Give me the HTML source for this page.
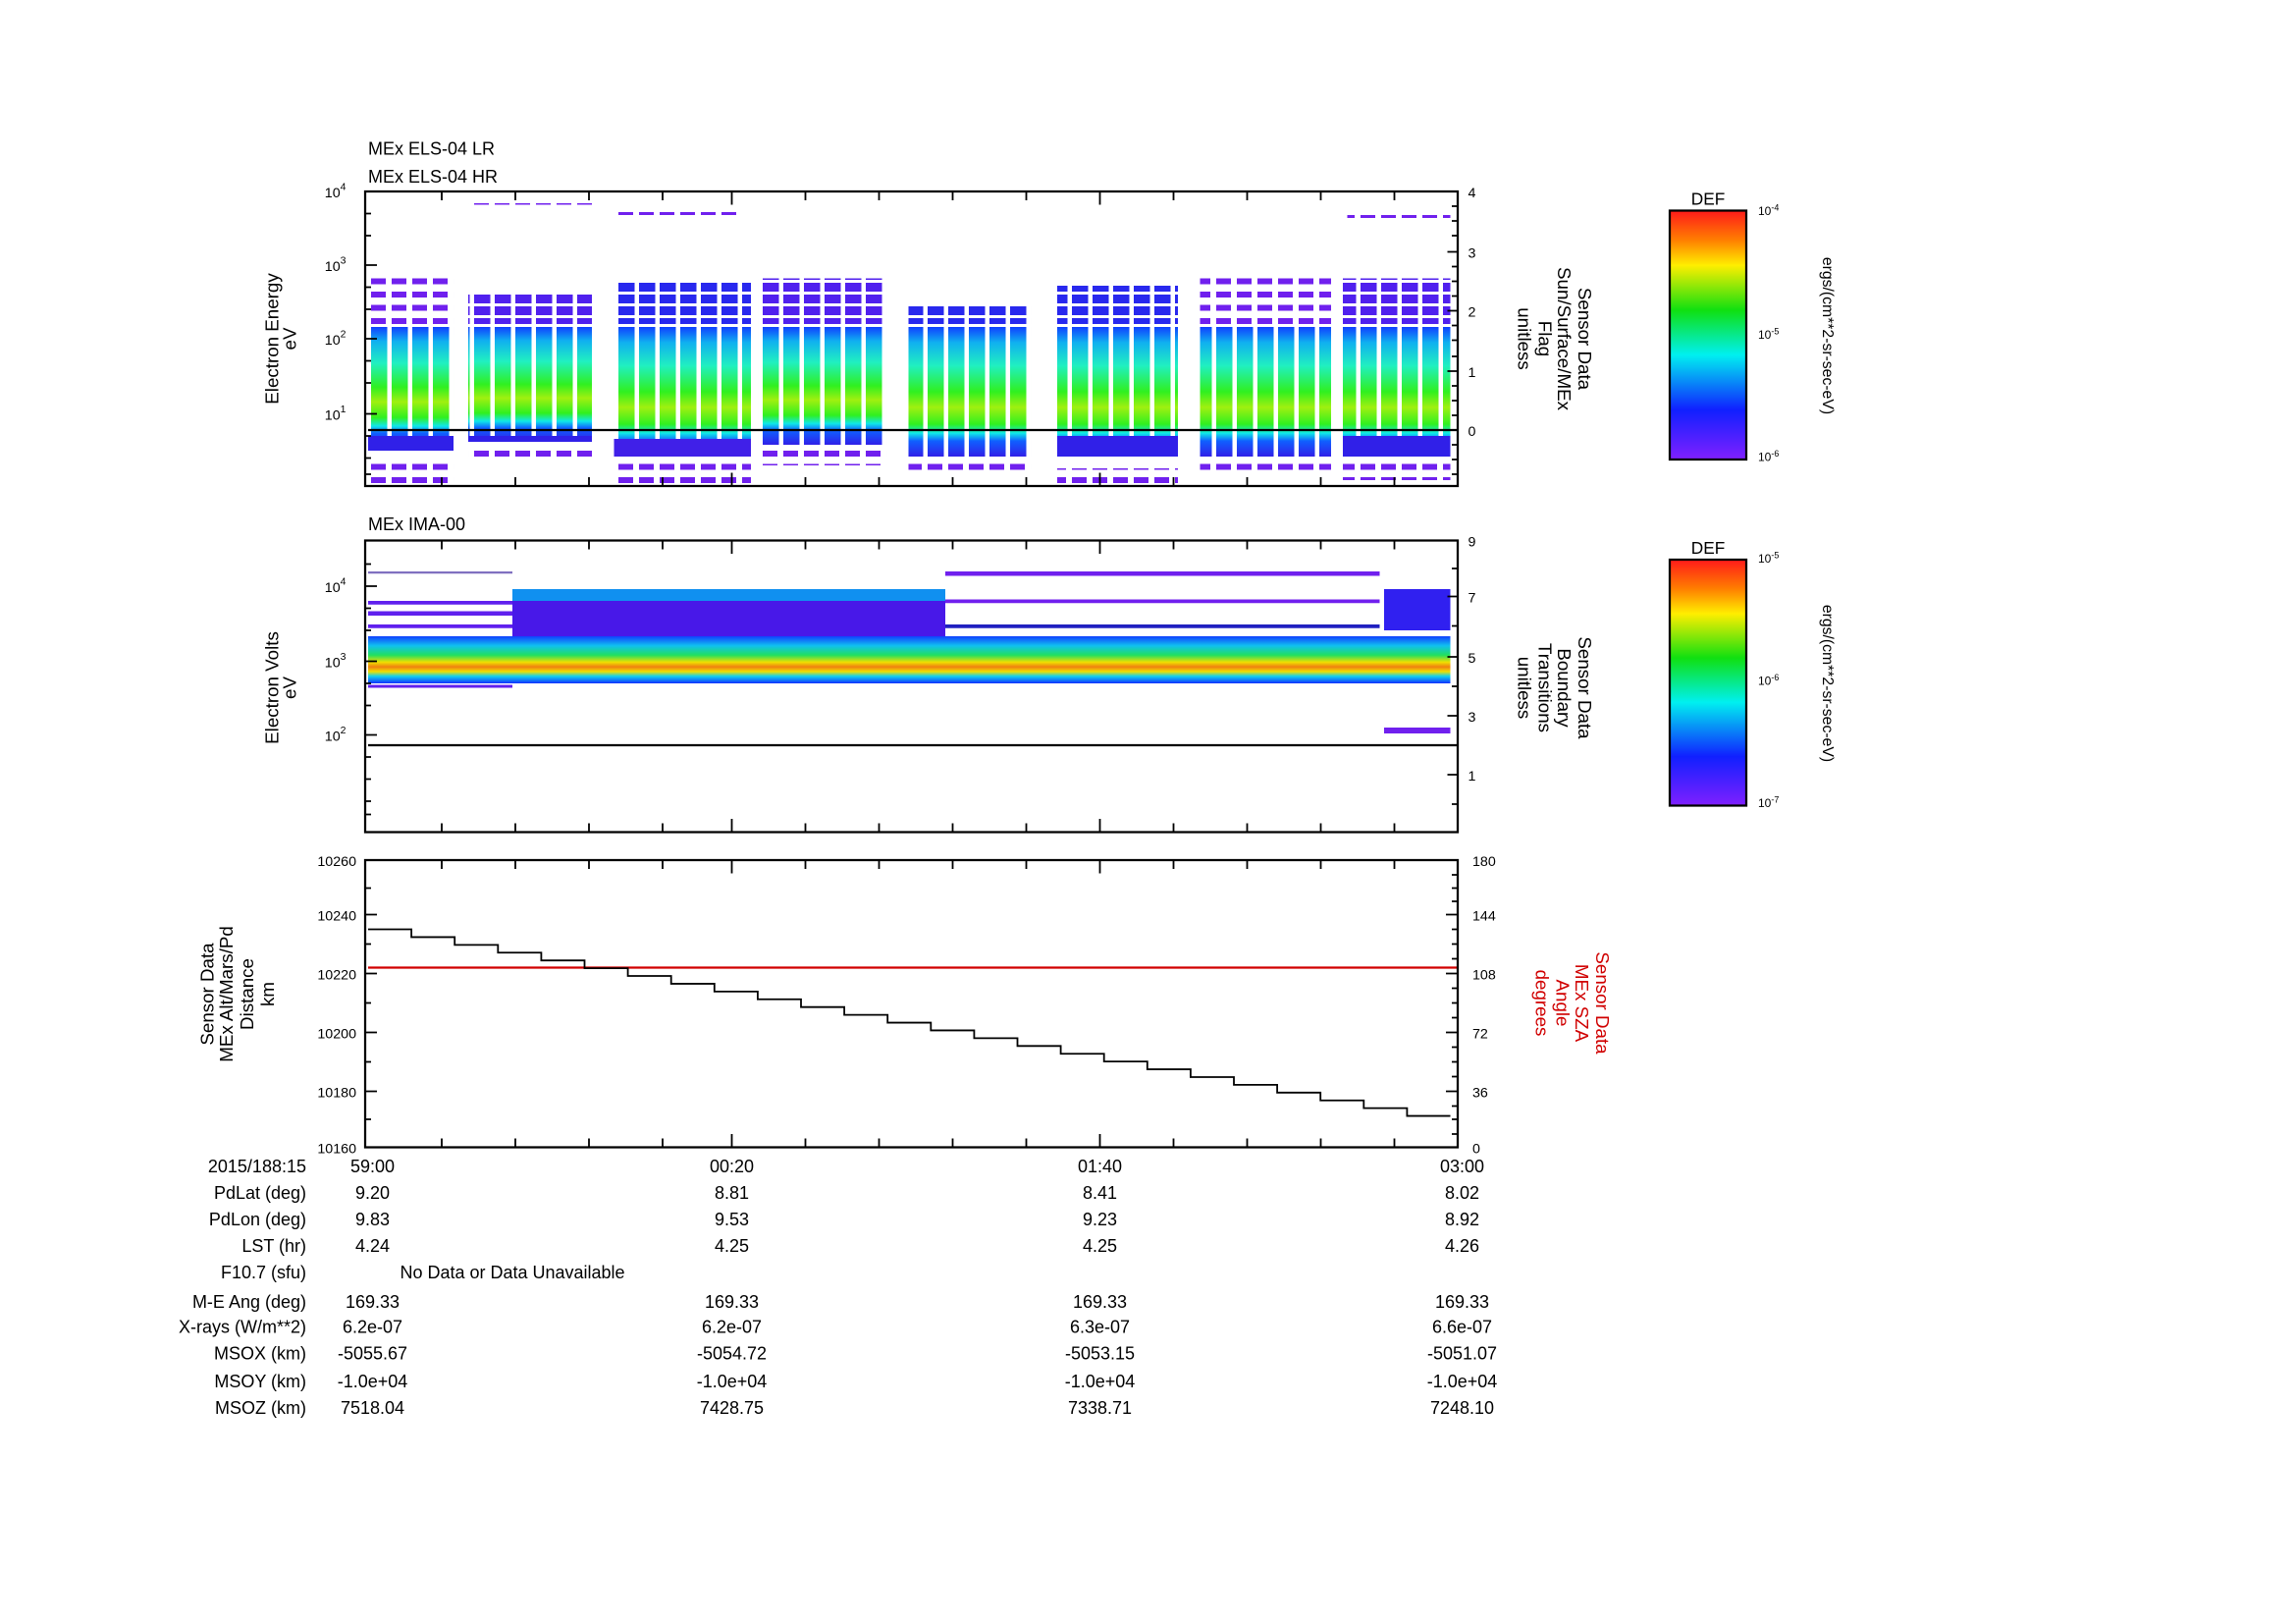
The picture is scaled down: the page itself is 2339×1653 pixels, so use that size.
<!DOCTYPE html>
<html><head><meta charset="utf-8"><style>
html,body{margin:0;padding:0;background:#fff}
svg{display:block}
text{font-family:"Liberation Sans",sans-serif;fill:#000}
</style></head><body>
<svg width="2339" height="1653" viewBox="0 0 1559.33 1102" xmlns="http://www.w3.org/2000/svg">
<defs>
<linearGradient id="cb" x1="0" y1="0" x2="0" y2="1">
<stop offset="0" stop-color="#ff1a1a"/><stop offset="0.12" stop-color="#ff8000"/><stop offset="0.22" stop-color="#ffee00"/><stop offset="0.4" stop-color="#10e010"/><stop offset="0.58" stop-color="#00f0f0"/><stop offset="0.8" stop-color="#1020ff"/><stop offset="1" stop-color="#8020ff"/>
</linearGradient>
<linearGradient id="p1" x1="0" y1="0" x2="0" y2="1">
<stop offset="0" stop-color="#1040ff"/><stop offset="0.12" stop-color="#10b0f0"/><stop offset="0.3" stop-color="#20f0c0"/><stop offset="0.5" stop-color="#30f020"/><stop offset="0.62" stop-color="#a0f010"/><stop offset="0.75" stop-color="#30f020"/><stop offset="0.82" stop-color="#10e8e8"/><stop offset="0.88" stop-color="#1060ff"/><stop offset="1" stop-color="#3020e8"/>
</linearGradient>
<linearGradient id="p2" x1="0" y1="0" x2="0" y2="1">
<stop offset="0" stop-color="#1040ff"/><stop offset="0.2" stop-color="#10c0f0"/><stop offset="0.4" stop-color="#20e060"/><stop offset="0.55" stop-color="#f0e000"/><stop offset="0.65" stop-color="#f08010"/><stop offset="0.75" stop-color="#f0e000"/><stop offset="0.85" stop-color="#10d0f0"/><stop offset="1" stop-color="#1030ff"/>
</linearGradient>
<pattern id="gap" width="14" height="10" patternUnits="userSpaceOnUse"><rect x="11" width="3" height="10" fill="#fff"/></pattern>
<pattern id="dash" width="14" height="9" patternUnits="userSpaceOnUse"><rect width="10" height="4" fill="#7020ee"/></pattern>
<pattern id="dashb" width="14" height="8" patternUnits="userSpaceOnUse"><rect width="11" height="6" fill="#2828ee"/></pattern>
<pattern id="dashp" width="14" height="8" patternUnits="userSpaceOnUse"><rect width="11" height="6" fill="#5020ee"/></pattern>
</defs>

<text x="250" y="105" font-size="12">MEx ELS-04 LR</text>
<text x="250" y="124" font-size="12">MEx ELS-04 HR</text>

<g>
<rect x="250" y="222" width="58" height="82" fill="url(#p1)"/>
<rect x="318" y="222" width="84" height="78" fill="url(#p1)"/>
<rect x="417" y="222" width="93" height="88" fill="url(#p1)"/>
<rect x="515" y="222" width="87" height="80" fill="url(#p1)"/>
<rect x="617" y="222" width="83" height="88" fill="url(#p1)"/>
<rect x="718" y="222" width="82" height="88" fill="url(#p1)"/>
<rect x="815" y="222" width="89" height="88" fill="url(#p1)"/>
<rect x="912" y="222" width="73" height="88" fill="url(#p1)"/>
<rect x="250" y="222" width="735" height="88" fill="url(#gap)"/>
<rect x="250" y="185" width="58" height="35" fill="url(#dash)"/>
<rect x="318" y="200" width="84" height="20" fill="url(#dashp)"/>
<rect x="417" y="192" width="93" height="28" fill="url(#dashb)"/>
<rect x="515" y="189" width="87" height="31" fill="url(#dashp)"/>
<rect x="617" y="206" width="83" height="14" fill="url(#dashb)"/>
<rect x="718" y="194" width="82" height="26" fill="url(#dashb)"/>
<rect x="815" y="185" width="89" height="35" fill="url(#dash)"/>
<rect x="912" y="189" width="73" height="31" fill="url(#dashp)"/>
<rect x="250" y="296" width="58" height="10" fill="#3020e8"/>
<rect x="318" y="296" width="84" height="4" fill="#3020e8"/>
<rect x="417" y="298" width="93" height="12" fill="#4020e8"/>
<rect x="718" y="296" width="82" height="14" fill="#3020e8"/>
<rect x="912" y="296" width="73" height="14" fill="#3020e8"/>
<rect x="250" y="314" width="58" height="16" fill="url(#dash)"/>
<rect x="318" y="306" width="84" height="6" fill="url(#dash)"/>
<rect x="417" y="314" width="93" height="14" fill="url(#dash)"/>
<rect x="515" y="306" width="87" height="10" fill="url(#dash)"/>
<rect x="617" y="312" width="83" height="8" fill="url(#dash)"/>
<rect x="718" y="318" width="82" height="10" fill="url(#dash)"/>
<rect x="815" y="310" width="89" height="12" fill="url(#dash)"/>
<rect x="912" y="312" width="73" height="14" fill="url(#dash)"/>
<rect x="318" y="138" width="84" height="4" fill="url(#dash)"/>
<rect x="417" y="142" width="83" height="4" fill="url(#dash)"/>
<rect x="718" y="130" width="78" height="2" fill="url(#dash)"/>
<rect x="915" y="146" width="70" height="4" fill="url(#dash)"/>
</g>
<line x1="250" y1="292" x2="990" y2="292" stroke="#000" stroke-width="1.5"/>
<rect x="248" y="130" width="742" height="200" fill="none" stroke="#000" stroke-width="1.5"/>

<g>
<rect x="250" y="432" width="735" height="32" fill="url(#p2)"/>
<rect x="348" y="400" width="294" height="8" fill="#1090f0"/>
<rect x="348" y="408" width="294" height="24" fill="#4818e8"/>
<rect x="940" y="400" width="45" height="28" fill="#3020f0"/>
<rect x="250" y="388" width="98" height="1.5" fill="#8070c0"/>
<rect x="250" y="408" width="98" height="2.5" fill="#6020ee"/>
<rect x="250" y="415" width="98" height="3" fill="#6020ee"/>
<rect x="250" y="424" width="98" height="2.5" fill="#6020ee"/>
<rect x="250" y="465" width="98" height="2" fill="#6020ee"/>
<rect x="642" y="388" width="295" height="3" fill="#7020ee"/>
<rect x="642" y="407" width="295" height="2.5" fill="#7020ee"/>
<rect x="642" y="424" width="295" height="2.5" fill="#2020c0"/>
<rect x="940" y="494" width="45" height="4" fill="#7020ee"/>
</g>
<line x1="250" y1="506" x2="990" y2="506" stroke="#000" stroke-width="1.5"/>
<text x="250" y="360" font-size="12">MEx IMA-00</text>
<rect x="248" y="367" width="742" height="198" fill="none" stroke="#000" stroke-width="1.5"/>

<line x1="250" y1="657" x2="990" y2="657" stroke="#d00000" stroke-width="1.5"/>
<path d="M250 631h29.4v5.28h29.4v5.28h29.4v5.28h29.4v5.28h29.4v5.28h29.4v5.28h29.4v5.28h29.4v5.28h29.4v5.28h29.4v5.28h29.4v5.28h29.4v5.28h29.4v5.28h29.4v5.28h29.4v5.28h29.4v5.28h29.4v5.28h29.4v5.28h29.4v5.28h29.4v5.28h29.4v5.28h29.4v5.28h29.4v5.28h29.4v5.28h29.4" fill="none" stroke="#000" stroke-width="1.2"/>
<rect x="248" y="584" width="742" height="195" fill="none" stroke="#000" stroke-width="1.5"/>

<g stroke="#000" stroke-width="1.2">
<path d="M300 130v6M350 130v6M400 130v6M450 130v6M497 130v9M547 130v6M597 130v6M647 130v6M697 130v6M747 130v9M797 130v6M847 130v6M897 130v6M947 130v6"/>
<path d="M300 330v-6M350 330v-6M400 330v-6M450 330v-6M497 330v-9M547 330v-6M597 330v-6M647 330v-6M697 330v-6M747 330v-9M797 330v-6M847 330v-6M897 330v-6M947 330v-6"/>
<path d="M300 367v6M350 367v6M400 367v6M450 367v6M497 367v9M547 367v6M597 367v6M647 367v6M697 367v6M747 367v9M797 367v6M847 367v6M897 367v6M947 367v6"/>
<path d="M300 565v-6M350 565v-6M400 565v-6M450 565v-6M497 565v-9M547 565v-6M597 565v-6M647 565v-6M697 565v-6M747 565v-9M797 565v-6M847 565v-6M897 565v-6M947 565v-6"/>
<path d="M300 584v6M350 584v6M400 584v6M450 584v6M497 584v9M547 584v6M597 584v6M647 584v6M697 584v6M747 584v9M797 584v6M847 584v6M897 584v6M947 584v6"/>
<path d="M300 779v-6M350 779v-6M400 779v-6M450 779v-6M497 779v-9M547 779v-6M597 779v-6M647 779v-6M697 779v-6M747 779v-9M797 779v-6M847 779v-6M897 779v-6M947 779v-6"/>
<path d="M248 130h8M248 180h8M248 230h8M248 281h8M248 145h4M248 160h4M248 195h4M248 210h4M248 245h4M248 260h4M248 296h4M248 311h4M248 322h4"/>
<path d="M990 130h-7M990 171h-7M990 211h-7M990 252h-7M990 292h-7M990 140h-4M990 150h-4M990 160h-4M990 181h-4M990 191h-4M990 201h-4M990 221h-4M990 231h-4M990 242h-4M990 262h-4M990 272h-4M990 282h-4M990 302h-4M990 312h-4M990 322h-4"/>
<path d="M248 398h8M248 449h8M248 499h8M248 383h4M248 413h4M248 428h4M248 464h4M248 479h4M248 514h4M248 529h4M248 544h4M248 553h4"/>
<path d="M990 367h-7M990 405h-7M990 446h-7M990 486h-7M990 526h-7M990 386h-4M990 425h-4M990 466h-4M990 506h-4M990 546h-4"/>
<path d="M248 621h8M248 661h8M248 701h8M248 741h8M248 603h4M248 641h4M248 681h4M248 721h4M248 760h4"/>
<path d="M990 621h-8M990 661h-8M990 701h-8M990 741h-8M990 594h-4M990 603h-4M990 612h-4M990 631h-4M990 641h-4M990 651h-4M990 671h-4M990 681h-4M990 691h-4M990 711h-4M990 721h-4M990 731h-4M990 751h-4M990 760h-4M990 770h-4"/>
</g>

<g font-size="9.5" text-anchor="end">
<text x="235" y="134">10<tspan font-size="7" dy="-5">4</tspan></text>
<text x="235" y="184">10<tspan font-size="7" dy="-5">3</tspan></text>
<text x="235" y="234">10<tspan font-size="7" dy="-5">2</tspan></text>
<text x="235" y="285">10<tspan font-size="7" dy="-5">1</tspan></text>
<text x="235" y="402">10<tspan font-size="7" dy="-5">4</tspan></text>
<text x="235" y="453">10<tspan font-size="7" dy="-5">3</tspan></text>
<text x="235" y="503">10<tspan font-size="7" dy="-5">2</tspan></text>
<text x="242" y="588">10260</text><text x="242" y="625">10240</text><text x="242" y="665">10220</text><text x="242" y="705">10200</text><text x="242" y="745">10180</text><text x="242" y="783">10160</text>
</g>
<g font-size="9.5">
<text x="997" y="134">4</text><text x="997" y="175">3</text><text x="997" y="215">2</text><text x="997" y="256">1</text><text x="997" y="296">0</text>
<text x="997" y="371">9</text><text x="997" y="409">7</text><text x="997" y="450">5</text><text x="997" y="490">3</text><text x="997" y="530">1</text>
<text x="1000" y="588">180</text><text x="1000" y="625">144</text><text x="1000" y="665">108</text><text x="1000" y="705">72</text><text x="1000" y="745">36</text><text x="1000" y="783">0</text>
</g>

<g font-size="12.5" text-anchor="middle">
<text transform="translate(189,230) rotate(-90)">Electron Energy</text>
<text transform="translate(201,230) rotate(-90)">eV</text>
<text transform="translate(189,467) rotate(-90)">Electron Volts</text>
<text transform="translate(201,467) rotate(-90)">eV</text>
<text transform="translate(145,675) rotate(-90)">Sensor Data</text>
<text transform="translate(158,675) rotate(-90)">MEx Alt/Mars/Pd</text>
<text transform="translate(172,675) rotate(-90)">Distance</text>
<text transform="translate(186,675) rotate(-90)">km</text>
<text transform="translate(1072,230) rotate(90)">Sensor Data</text>
<text transform="translate(1058,230) rotate(90)">Sun/Surface/MEx</text>
<text transform="translate(1045,230) rotate(90)">Flag</text>
<text transform="translate(1031,230) rotate(90)">unitless</text>
<text transform="translate(1072,467) rotate(90)">Sensor Data</text>
<text transform="translate(1058,467) rotate(90)">Boundary</text>
<text transform="translate(1045,467) rotate(90)">Transitions</text>
<text transform="translate(1031,467) rotate(90)">unitless</text>
<text fill="#d00000" style="fill:#d00000" transform="translate(1084,681) rotate(90)">Sensor Data</text>
<text style="fill:#d00000" transform="translate(1070,681) rotate(90)">MEx SZA</text>
<text style="fill:#d00000" transform="translate(1057,681) rotate(90)">Angle</text>
<text style="fill:#d00000" transform="translate(1043,681) rotate(90)">degrees</text>
</g>

<rect x="1134" y="143" width="52" height="169" fill="url(#cb)" stroke="#000" stroke-width="1.5"/>
<text x="1160" y="139" font-size="11.5" text-anchor="middle">DEF</text>
<g font-size="8"><text x="1194" y="146">10<tspan font-size="6" dy="-3">-4</tspan></text><text x="1194" y="230">10<tspan font-size="6" dy="-3">-5</tspan></text><text x="1194" y="313">10<tspan font-size="6" dy="-3">-6</tspan></text></g>
<text transform="translate(1238,228) rotate(90)" font-size="10.5" text-anchor="middle">ergs/(cm**2-sr-sec-eV)</text>
<rect x="1134" y="380" width="52" height="167" fill="url(#cb)" stroke="#000" stroke-width="1.5"/>
<text x="1160" y="376" font-size="11.5" text-anchor="middle">DEF</text>
<g font-size="8"><text x="1194" y="382">10<tspan font-size="6" dy="-3">-5</tspan></text><text x="1194" y="465">10<tspan font-size="6" dy="-3">-6</tspan></text><text x="1194" y="548">10<tspan font-size="6" dy="-3">-7</tspan></text></g>
<text transform="translate(1238,464) rotate(90)" font-size="10.5" text-anchor="middle">ergs/(cm**2-sr-sec-eV)</text>

<g font-size="12" text-anchor="end">
<text x="208" y="796">2015/188:15</text>
<text x="208" y="814">PdLat (deg)</text>
<text x="208" y="832">PdLon (deg)</text>
<text x="208" y="850">LST (hr)</text>
<text x="208" y="868">F10.7 (sfu)</text>
<text x="208" y="888">M-E Ang (deg)</text>
<text x="208" y="905">X-rays (W/m**2)</text>
<text x="208" y="923">MSOX (km)</text>
<text x="208" y="942">MSOY (km)</text>
<text x="208" y="960">MSOZ (km)</text>
</g>
<g font-size="12" text-anchor="middle">
<text x="253" y="796">59:00</text><text x="497" y="796">00:20</text><text x="747" y="796">01:40</text><text x="993" y="796">03:00</text>
<text x="253" y="814">9.20</text><text x="497" y="814">8.81</text><text x="747" y="814">8.41</text><text x="993" y="814">8.02</text>
<text x="253" y="832">9.83</text><text x="497" y="832">9.53</text><text x="747" y="832">9.23</text><text x="993" y="832">8.92</text>
<text x="253" y="850">4.24</text><text x="497" y="850">4.25</text><text x="747" y="850">4.25</text><text x="993" y="850">4.26</text>
<text x="348" y="868">No Data or Data Unavailable</text>
<text x="253" y="888">169.33</text><text x="497" y="888">169.33</text><text x="747" y="888">169.33</text><text x="993" y="888">169.33</text>
<text x="253" y="905">6.2e-07</text><text x="497" y="905">6.2e-07</text><text x="747" y="905">6.3e-07</text><text x="993" y="905">6.6e-07</text>
<text x="253" y="923">-5055.67</text><text x="497" y="923">-5054.72</text><text x="747" y="923">-5053.15</text><text x="993" y="923">-5051.07</text>
<text x="253" y="942">-1.0e+04</text><text x="497" y="942">-1.0e+04</text><text x="747" y="942">-1.0e+04</text><text x="993" y="942">-1.0e+04</text>
<text x="253" y="960">7518.04</text><text x="497" y="960">7428.75</text><text x="747" y="960">7338.71</text><text x="993" y="960">7248.10</text>
</g>
</svg>
</body></html>
